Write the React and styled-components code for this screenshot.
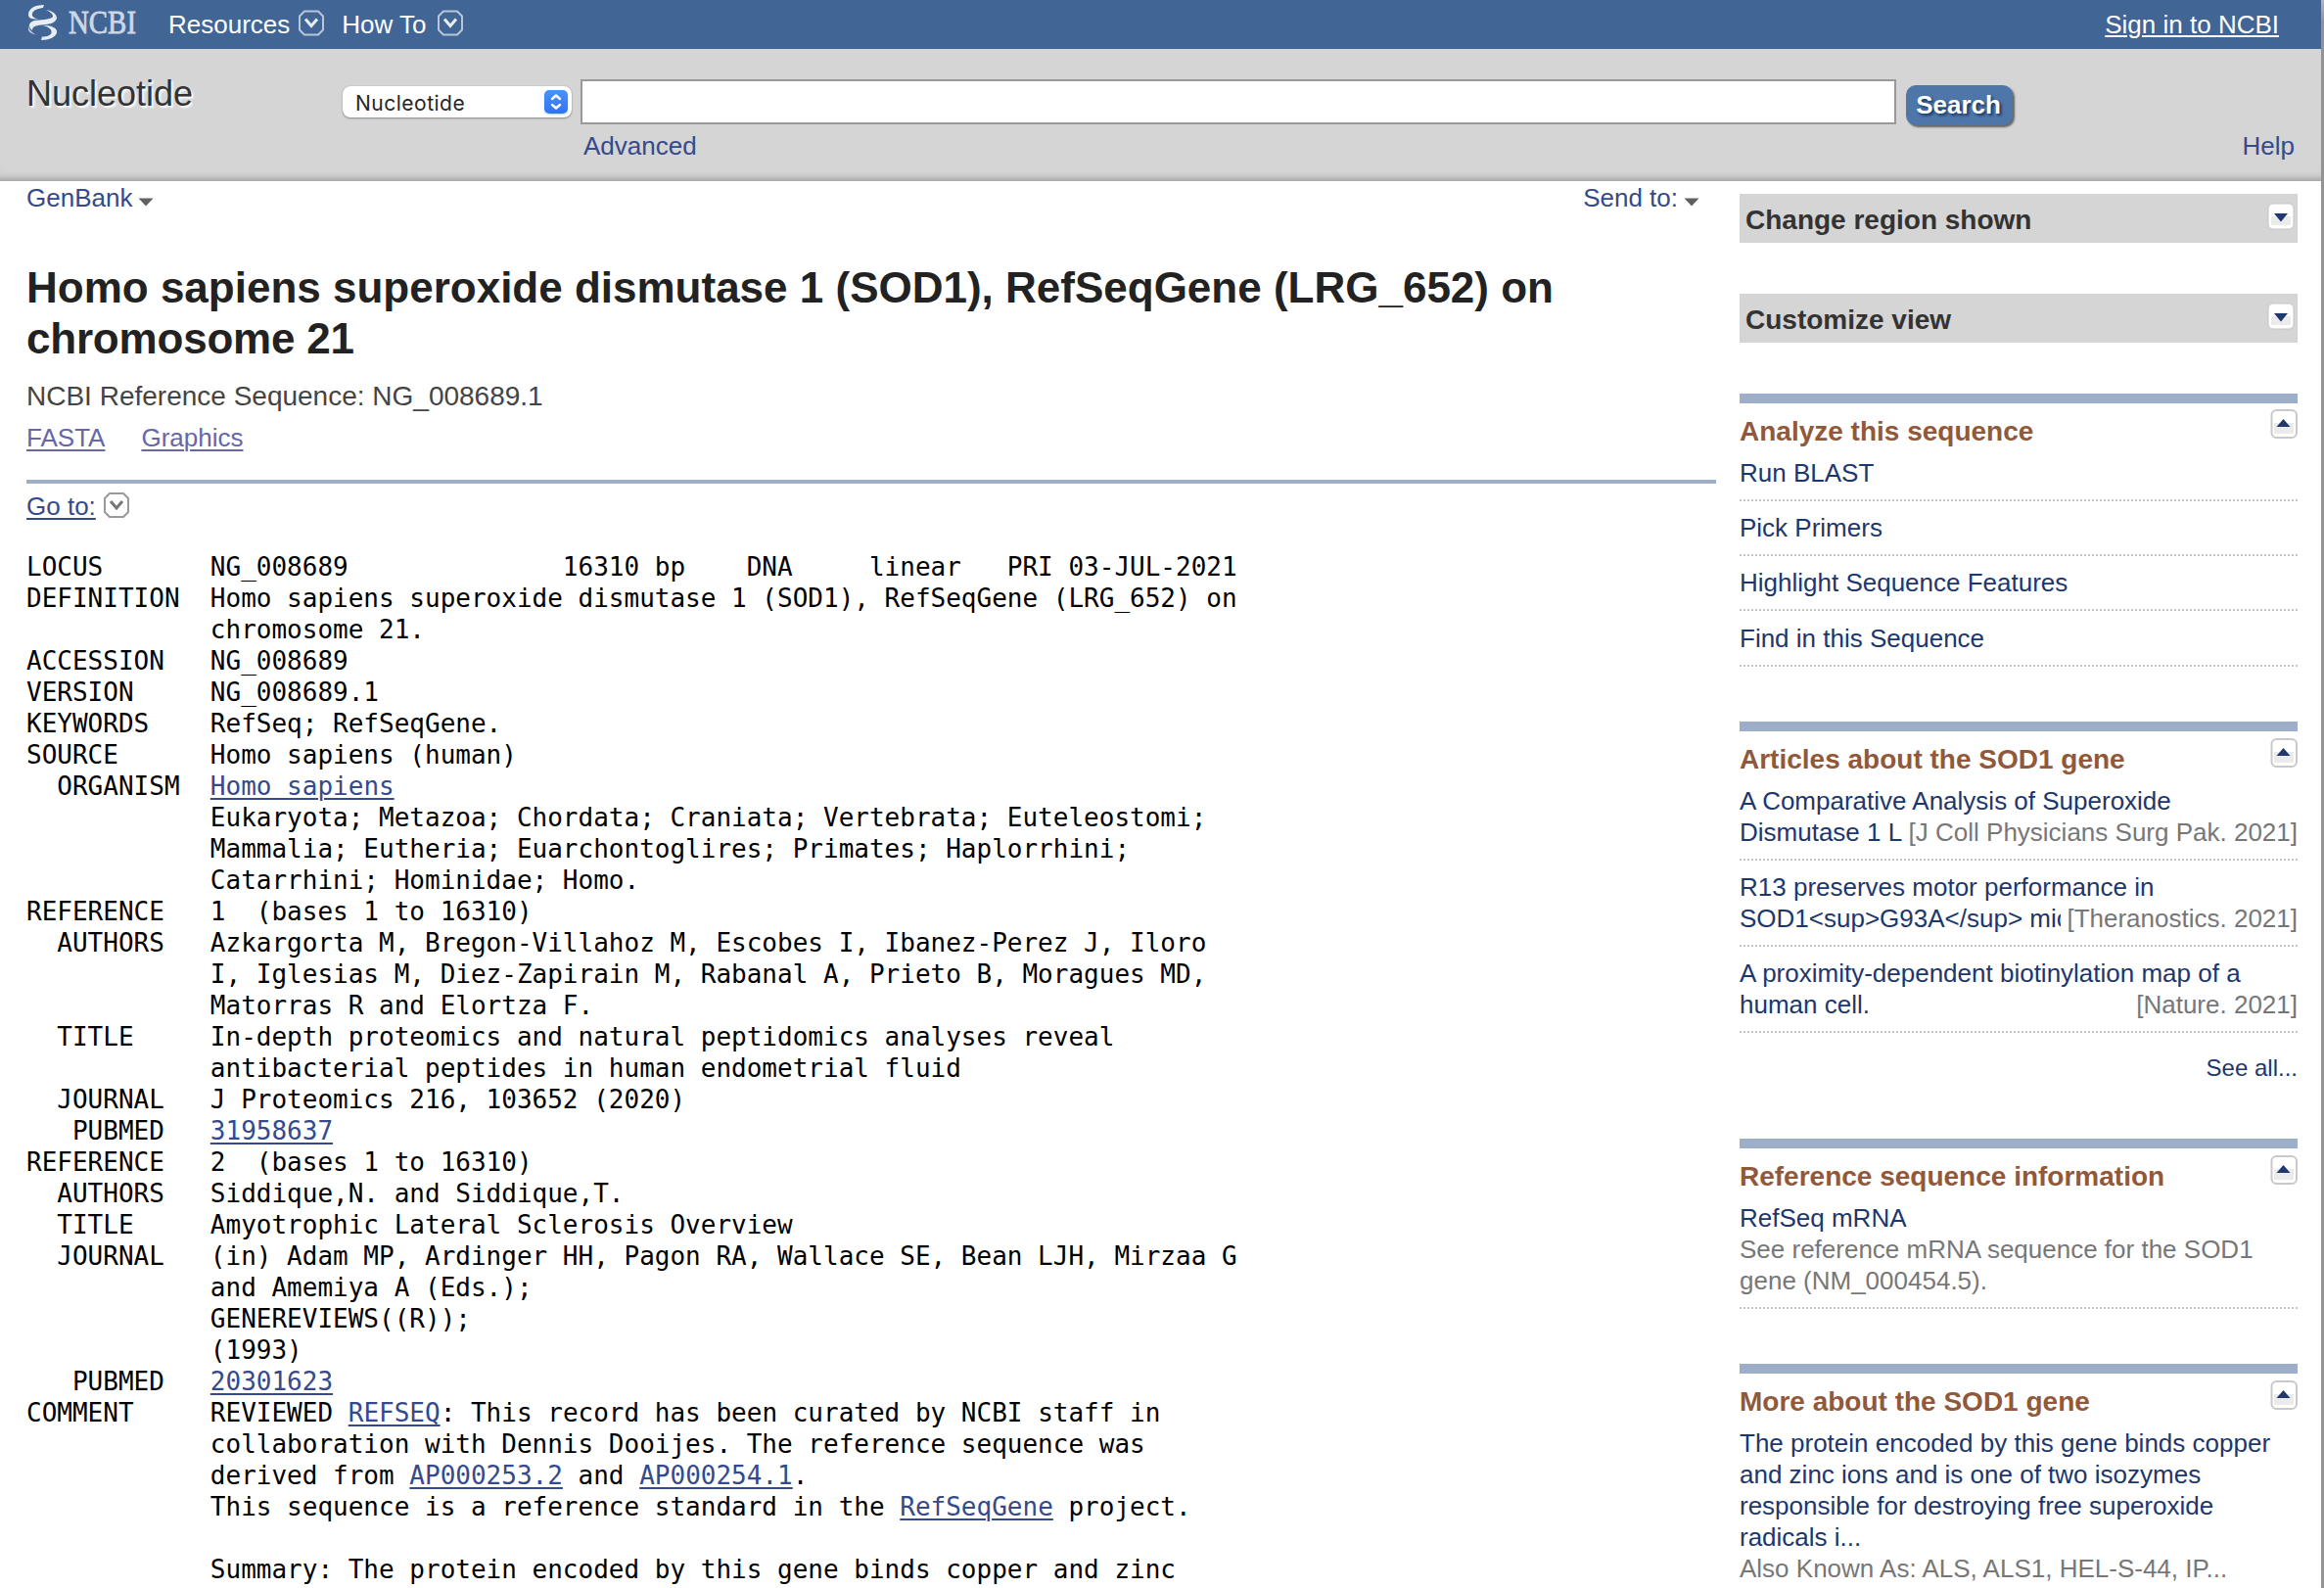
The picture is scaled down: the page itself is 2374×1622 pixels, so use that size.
import React from "react";
import styled, { createGlobalStyle, css } from "styled-components";

const sans = `"Liberation Sans", Arial, Helvetica, sans-serif`;

const GlobalStyle = createGlobalStyle`
  *, *::before, *::after { box-sizing: border-box; }
  html, body { margin: 0; padding: 0; overflow: hidden; }
  body {
    background: #fff;
    font-family: ${sans};
    font-size: 26px;
    line-height: 32px;
    color: #000;
  }
`;

const Window = styled.div`
  display: flex;
  width: 2374px;
  height: 1622px;
  overflow: hidden;
`;

const WindowEdge = styled.div`
  flex: 0 0 3px;
  background: linear-gradient(#b4b4b4 0, #939393 22px);
`;

const Page = styled.div`
  flex: 0 0 2371px;
  overflow: hidden;
`;

const TopBar = styled.header`
  display: flex;
  align-items: flex-start;
  height: 50px;
  padding: 0 43px 0 28px;
  background: #416594;
  color: #fff;
`;

const Logo = styled.svg`
  flex: none;
  margin-right: 14px;
`;

const MenuItem = styled.div`
  display: flex;
  margin: 9px 18px 0 0;
  gap: ${(p) => p.$gap || "9px"};
  white-space: nowrap;
`;

const SignIn = styled.a`
  margin: 9px 0 0 auto;
  text-decoration: underline;
  text-decoration-thickness: 2px;
  text-underline-offset: 2px;
`;

const SearchArea = styled.section`
  display: flex;
  align-items: flex-start;
  height: 135px;
  padding: 0 27px;
  background: #d5d5d5;
  box-shadow: inset 0 -9px 7px -6px #a0a0a0;
`;

const DatabaseName = styled.div`
  flex: 0 0 323px;
  margin-top: 25px;
  font-size: 36px;
  line-height: 42px;
  color: #333;
  text-shadow: 2px 2px 2px #fff;
`;

const Select = styled.div`
  display: flex;
  align-items: center;
  justify-content: space-between;
  width: 234px;
  height: 32px;
  margin-top: 38px;
  padding: 0 4px 0 13px;
  border-radius: 8px;
  background: #fff;
  box-shadow: 0 1px 2px rgba(0, 0, 0, 0.35), 0 0 1px rgba(0, 0, 0, 0.25);
  color: #262626;
  font-family: Inter, Roboto, sans-serif;
  font-size: 21px;
  letter-spacing: 0.5px;
`;

const SelectValue = styled.span`
  padding-top: 3px;
`;

const Stepper = styled.svg`
  flex: none;
  border-radius: 5px;
  background: linear-gradient(#4a92f8, #2f74f6);
  box-shadow: 0 1px 2px rgba(47, 116, 246, 0.35);
`;

const QueryColumn = styled.div`
  width: 1344px;
  margin: 31px 0 0 9px;
`;

const QueryBox = styled.div`
  height: 46px;
  border: 2px solid #999;
  background: #fff;
`;

const HeaderLink = styled.a`
  display: block;
  color: #344a8b;
`;

const AdvancedLink = styled(HeaderLink)`
  margin: 6px 0 0 3px;
`;

const HelpLink = styled(HeaderLink)`
  margin: 83px 0 0 auto;
`;

const SearchButton = styled.div`
  width: 109px;
  height: 41px;
  margin: 37px 0 0 10px;
  padding-right: 2px;
  border-radius: 10px;
  background: #4f76a8;
  box-shadow: 2px 2px 2px #666;
  color: #fff;
  font-weight: bold;
  line-height: 40px;
  text-align: center;
  text-shadow: 2px 2px 3px #14335c;
`;

const Body = styled.div`
  display: flex;
  align-items: flex-start;
  gap: 24px;
  padding-left: 27px;
`;

const Main = styled.main`
  flex: 0 0 1726px;
`;

const DisplayBar = styled.div`
  display: flex;
  justify-content: space-between;
  padding: 1px 17px 0 0;
`;

const DisplayMenu = styled.a`
  display: flex;
  align-items: flex-start;
  gap: 6px;
  color: #344a8b;
`;

const DownMark = styled.svg`
  margin-top: 15px;
`;

const Title = styled.h1`
  margin: 50px 0 0;
  font-size: 44px;
  line-height: 52px;
  color: #222;
`;

const TitleEnd = styled.span`
  letter-spacing: -0.2px;
`;

const Subtitle = styled.p`
  margin: 17px 0 0;
  font-size: 28px;
  color: #444;
`;

const FormatLinks = styled.div`
  display: flex;
  gap: 37px;
  margin-top: 10px;
`;

const underlined = css`
  text-decoration: underline;
  text-decoration-thickness: 2px;
  text-underline-offset: 3px;
`;

const VisitedLink = styled.a`
  color: #6666a9;
  ${underlined}
`;

const GoTo = styled.div`
  display: flex;
  gap: 8px;
  margin-top: 27px;
  padding-top: 7px;
  border-top: 4px solid #9daec8;
`;

const TextLink = styled.a`
  color: #344a8b;
  ${underlined}
`;

const Record = styled.div`
  margin-top: 30px;
  font-family: "DejaVu Sans Mono", "Liberation Mono", monospace;
`;

const RecordLine = styled.div`
  height: 32px;
  white-space: pre;
`;

const Sidebar = styled.aside`
  flex: none;
  width: 570px;
  padding-top: 13px;
`;

const CollapsedPanel = styled.div`
  display: flex;
  justify-content: space-between;
  height: 50px;
  margin-bottom: 52px;
  padding: 9px 3px 0 6px;
  background: #d5d5d5;
  color: #333;
  font-size: 28px;
  font-weight: bold;
`;

const CollapsedTitle = styled.span`
  padding-top: 2px;
`;

const Panel = styled.section`
  margin-bottom: ${(p) => p.$bottom || "56.3px"};
  border-top: 10px solid #9daec8;
`;

const PanelHead = styled.div`
  display: flex;
  justify-content: space-between;
  height: 54.7px;
  padding-top: ${(p) => (p.$first ? "6px" : "7px")};
`;

const PanelTitle = styled.h2`
  margin: ${(p) => (p.$first ? "7px" : "6px")} 0 0;
  font-size: 28px;
  line-height: 32px;
  color: #91593a;
`;

const Entry = styled.div`
  padding-bottom: 11px;
  color: #1c376e;
  & + & {
    padding-top: 11.33px;
  }
  ${(p) =>
    !p.$last &&
    css`
      background: repeating-linear-gradient(90deg, #c6c6c6 0 2px, transparent 2px 4px) left bottom / 100% 2px no-repeat;
      padding-bottom: 13px;
    `}
`;

const Line = styled.div`
  display: flex;
  white-space: nowrap;
`;

const LineText = styled.span`
  flex: 1 1 0;
  min-width: 0;
  overflow: hidden;
`;

const Citation = styled.span`
  flex: none;
  padding-left: 6px;
  color: #777;
`;

const Note = styled.div`
  color: #777;
`;

const SeeAll = styled.a`
  display: block;
  margin-top: 20.6px;
  font-size: 24px;
  line-height: 30px;
  text-align: right;
  color: #1c376e;
`;

const BoxChevron = ({ frame, mark, top = 1.5 }) => (
  <svg width="26" height="28" viewBox="0 0 26 28">
    <g transform={`translate(0 ${top})`} fill="none">
      <path d="M6 1H20L25 6V20L20 25H6L1 20V6Z" stroke={frame} strokeWidth="2" strokeLinejoin="round" />
      <path d="M7 9L13 16L19 9" stroke={mark} strokeWidth="3" />
    </g>
  </svg>
);

const Toggle = ({ up }) => {
  const size = up ? 30 : 28;
  return (
    <svg width={size} height={size} viewBox={`0 0 ${size} ${size}`}>
      <rect x={up ? 3.5 : 1} y="1" width={up ? 25.5 : 26} height={size - 2} rx="5" fill="#fff" stroke={up ? "#c9c9c9" : "#c6c6c6"} strokeWidth={up ? 2 : 1} />
      <rect x={up ? 6 : 4} y="14" width={up ? 20 : 20} height={size - 19} rx="1" fill="#ebebeb" />
      <path d={up ? "M8.500 18L15.500 10L22.500 18Z" : "M7 11H21L14 19.5Z"} fill="#1f3870" />
    </svg>
  );
};

const Down = () => (
  <DownMark width="16" height="10" viewBox="0 0 16 10">
    <path d="M0.5 1.5H15.5L8 9.5Z" fill="#606060" />
  </DownMark>
);

const NcbiLogo = () => (
  <Logo width="130" height="46" viewBox="28 0 130 46">
    <g fill="#e8edf4">
      <path d="M45 5C35 5 29 9 29 15C29 17 30 18 32 19L39 20C34 18 32 16 33 13.5C34 10.5 39 8.500 44 8Z" />
      <path d="M47 10C54 11 58 15 58 18.500C57 24 49 25 42 25.500C35 26 33 28 33 31C28 27 29 22 37 20.800C45 20 53 19.500 54 17C54.500 14.500 51 12 47 10Z" />
      <path d="M48 26C55 27 59 30 58 33.500C57 38 50 41 42 41L43 37.500C48 37.500 52 36 52.500 33.500C53 30.500 51 28 44 26Z" />
      <path d="M29 24C29 30 32 33 37 35.500C32 34.500 29 33 29 30Z" opacity="0.75" />
    </g>
    <text x="70" y="34" textLength="69" lengthAdjust="spacingAndGlyphs" fontFamily="Liberation Serif, serif" fontSize="33" fill="#ccd7e6" stroke="#ccd7e6" strokeWidth="0.8">
      NCBI
    </text>
  </Logo>
);

/* Flat-file record; a part in square-bracket pairs [[...]] is a link. */
const recordText = `LOCUS       NG_008689              16310 bp    DNA     linear   PRI 03-JUL-2021
DEFINITION  Homo sapiens superoxide dismutase 1 (SOD1), RefSeqGene (LRG_652) on
            chromosome 21.
ACCESSION   NG_008689
VERSION     NG_008689.1
KEYWORDS    RefSeq; RefSeqGene.
SOURCE      Homo sapiens (human)
  ORGANISM  [[Homo sapiens]]
            Eukaryota; Metazoa; Chordata; Craniata; Vertebrata; Euteleostomi;
            Mammalia; Eutheria; Euarchontoglires; Primates; Haplorrhini;
            Catarrhini; Hominidae; Homo.
REFERENCE   1  (bases 1 to 16310)
  AUTHORS   Azkargorta M, Bregon-Villahoz M, Escobes I, Ibanez-Perez J, Iloro
            I, Iglesias M, Diez-Zapirain M, Rabanal A, Prieto B, Moragues MD,
            Matorras R and Elortza F.
  TITLE     In-depth proteomics and natural peptidomics analyses reveal
            antibacterial peptides in human endometrial fluid
  JOURNAL   J Proteomics 216, 103652 (2020)
   PUBMED   [[31958637]]
REFERENCE   2  (bases 1 to 16310)
  AUTHORS   Siddique,N. and Siddique,T.
  TITLE     Amyotrophic Lateral Sclerosis Overview
  JOURNAL   (in) Adam MP, Ardinger HH, Pagon RA, Wallace SE, Bean LJH, Mirzaa G
            and Amemiya A (Eds.);
            GENEREVIEWS((R));
            (1993)
   PUBMED   [[20301623]]
COMMENT     REVIEWED [[REFSEQ]]: This record has been curated by NCBI staff in
            collaboration with Dennis Dooijes. The reference sequence was
            derived from [[AP000253.2]] and [[AP000254.1]].
            This sequence is a reference standard in the [[RefSeqGene]] project.

            Summary: The protein encoded by this gene binds copper and zinc`;

const SequenceRecord = () => (
  <Record>
    {recordText.split("\n").map((line, i) => (
      <RecordLine key={i}>
        {line.split(/\[\[|\]\]/).map((part, j) => (j % 2 ? <TextLink key={j}>{part}</TextLink> : part))}
      </RecordLine>
    ))}
  </Record>
);

const PanelHeader = ({ first, children }) => (
  <PanelHead $first={first}>
    <PanelTitle $first={first}>{children}</PanelTitle>
    <Toggle up />
  </PanelHead>
);

const articles = [
  ["A Comparative Analysis of Superoxide", "Dismutase 1 L", "[J Coll Physicians Surg Pak. 2021]"],
  ["R13 preserves motor performance in", "SOD1<sup>G93A</sup> mice", "[Theranostics. 2021]"],
  ["A proximity-dependent biotinylation map of a", "human cell.", "[Nature. 2021]"],
];

const tools = ["Run BLAST", "Pick Primers", "Highlight Sequence Features", "Find in this Sequence"];

export default function App() {
  return (
    <Window>
      <GlobalStyle />
      <Page>
        <TopBar>
          <NcbiLogo />
          <MenuItem>
            Resources
            <BoxChevron frame="#b9c6d8" mark="#e8edf4" />
          </MenuItem>
          <MenuItem $gap="11px">
            How To
            <BoxChevron frame="#b9c6d8" mark="#e8edf4" />
          </MenuItem>
          <SignIn>Sign in to NCBI</SignIn>
        </TopBar>
        <SearchArea>
          <DatabaseName>Nucleotide</DatabaseName>
          <Select>
            <SelectValue>Nucleotide</SelectValue>
            <Stepper width="24" height="24" viewBox="0 0 24 24">
              <path d="M8 9L12 5.500L16 9M8 15L12 18.500L16 15" fill="none" stroke="#fff" strokeWidth="2.400" strokeLinecap="round" strokeLinejoin="round" />
            </Stepper>
          </Select>
          <QueryColumn>
            <QueryBox />
            <AdvancedLink>Advanced</AdvancedLink>
          </QueryColumn>
          <SearchButton>Search</SearchButton>
          <HelpLink>Help</HelpLink>
        </SearchArea>
        <Body>
          <Main>
            <DisplayBar>
              <DisplayMenu>
                GenBank
                <Down />
              </DisplayMenu>
              <DisplayMenu>
                Send to:
                <Down />
              </DisplayMenu>
            </DisplayBar>
            <Title>
              Homo sapiens superoxide dismutase 1 (SOD1), RefSeqGene (LRG_652) on
              <br />
              <TitleEnd>chromosome 21</TitleEnd>
            </Title>
            <Subtitle>NCBI Reference Sequence: NG_008689.1</Subtitle>
            <FormatLinks>
              <VisitedLink>FASTA</VisitedLink>
              <VisitedLink>Graphics</VisitedLink>
            </FormatLinks>
            <GoTo>
              <TextLink>Go to:</TextLink>
              <BoxChevron frame="#999" mark="#777" top={2} />
            </GoTo>
            <SequenceRecord />
          </Main>
          <Sidebar>
            {["Change region shown", "Customize view"].map((t) => (
              <CollapsedPanel key={t}>
                <CollapsedTitle>{t}</CollapsedTitle>
                <Toggle />
              </CollapsedPanel>
            ))}
            <Panel>
              <PanelHeader first>Analyze this sequence</PanelHeader>
              {tools.map((t) => (
                <Entry key={t}>{t}</Entry>
              ))}
            </Panel>
            <Panel $bottom="57px">
              <PanelHeader>Articles about the SOD1 gene</PanelHeader>
              {articles.map(([first, second, source]) => (
                <Entry key={source}>
                  <Line>{first}</Line>
                  <Line>
                    <LineText>{second}</LineText>
                    <Citation>{source}</Citation>
                  </Line>
                </Entry>
              ))}
              <SeeAll>See all...</SeeAll>
            </Panel>
            <Panel>
              <PanelHeader>Reference sequence information</PanelHeader>
              <Entry>
                RefSeq mRNA
                <Note>
                  See reference mRNA sequence for the SOD1
                  <br />
                  gene (NM_000454.5).
                </Note>
              </Entry>
            </Panel>
            <Panel>
              <PanelHeader>More about the SOD1 gene</PanelHeader>
              <Entry $last>
                The protein encoded by this gene binds copper
                <br />
                and zinc ions and is one of two isozymes
                <br />
                responsible for destroying free superoxide
                <br />
                radicals i...
                <Note>Also Known As: ALS, ALS1, HEL-S-44, IP...</Note>
              </Entry>
            </Panel>
          </Sidebar>
        </Body>
      </Page>
      <WindowEdge />
    </Window>
  );
}
